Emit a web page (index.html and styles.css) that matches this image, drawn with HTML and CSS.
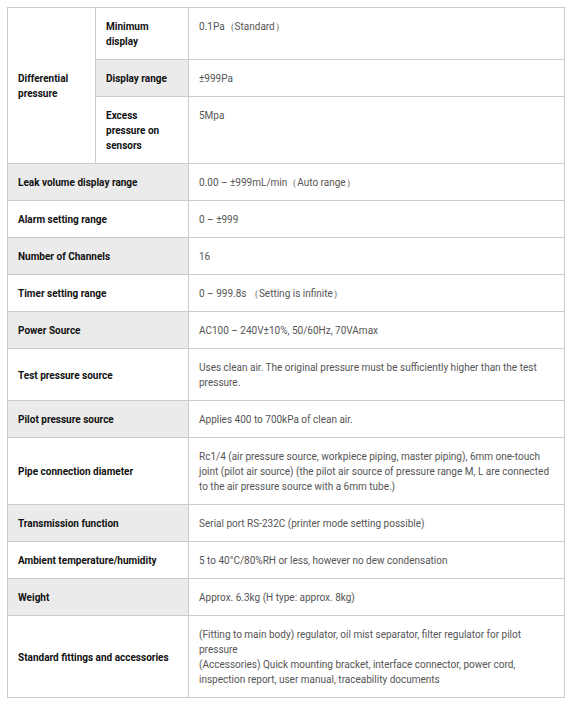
FILE: index.html
```html
<!DOCTYPE html>
<html>
<head>
<meta charset="utf-8">
<link rel="stylesheet" href="styles.css">
</head>
<body>
<table class="spec">
  <colgroup>
    <col class="c1">
    <col class="c2">
    <col class="c3">
  </colgroup>
  <tbody>
    <tr>
      <th class="lbl" rowspan="3">Differential pressure</th>
      <th class="lbl">Minimum display</th>
      <td class="val">0.1Pa（Standard）</td>
    </tr>
    <tr>
      <th class="lbl grey">Display range</th>
      <td class="val">±999Pa</td>
    </tr>
    <tr>
      <th class="lbl">Excess pressure on sensors</th>
      <td class="val">5Mpa</td>
    </tr>
    <tr>
      <th class="lbl grey" colspan="2">Leak volume display range</th>
      <td class="val">0.00 – ±999mL/min（Auto range）</td>
    </tr>
    <tr>
      <th class="lbl" colspan="2">Alarm setting range</th>
      <td class="val">0 – ±999</td>
    </tr>
    <tr>
      <th class="lbl grey" colspan="2">Number of Channels</th>
      <td class="val">16</td>
    </tr>
    <tr>
      <th class="lbl" colspan="2">Timer setting range</th>
      <td class="val">0 – 999.8s （Setting is infinite）</td>
    </tr>
    <tr>
      <th class="lbl grey" colspan="2">Power Source</th>
      <td class="val">AC100 – 240V±10%, 50/60Hz, 70VAmax</td>
    </tr>
    <tr>
      <th class="lbl" colspan="2">Test pressure source</th>
      <td class="val">Uses clean air. The original pressure must be sufficiently higher than the test pressure.</td>
    </tr>
    <tr>
      <th class="lbl grey" colspan="2">Pilot pressure source</th>
      <td class="val">Applies 400 to 700kPa of clean air.</td>
    </tr>
    <tr>
      <th class="lbl" colspan="2">Pipe connection diameter</th>
      <td class="val">Rc1/4 (air pressure source, workpiece piping, master piping), 6mm one-touch joint (pilot air source) (the pilot air source of pressure range M, L are connected to the air pressure source with a 6mm tube.)</td>
    </tr>
    <tr>
      <th class="lbl grey" colspan="2">Transmission function</th>
      <td class="val">Serial port RS-232C (printer mode setting possible)</td>
    </tr>
    <tr>
      <th class="lbl" colspan="2">Ambient temperature/humidity</th>
      <td class="val">5 to 40°C/80%RH or less, however no dew condensation</td>
    </tr>
    <tr>
      <th class="lbl grey" colspan="2">Weight</th>
      <td class="val">Approx. 6.3kg (H type: approx. 8kg)</td>
    </tr>
    <tr>
      <th class="lbl" colspan="2">Standard fittings and accessories</th>
      <td class="val">(Fitting to main body) regulator, oil mist separator, filter regulator for pilot pressure<br>(Accessories) Quick mounting bracket, interface connector, power cord, inspection report, user manual, traceability documents</td>
    </tr>
  </tbody>
</table>
</body>
</html>
```
FILE: styles.css
```css
html, body {
  margin: 0;
  padding: 0;
  background: #fff;
}
body {
  padding: 7px;
  font-family: Roboto, "Liberation Sans", sans-serif;
  font-size: 10px;
  line-height: 15px;
}
.spec {
  border-collapse: collapse;
  table-layout: fixed;
  width: 557px;
}
.c1 { width: 88px; }
.c2 { width: 93px; }
.c3 { width: 376px; }
.spec th, .spec td {
  border: 1px solid #cccccc;
  padding: 11px 10px 10px 10px;
  text-align: left;
}
.lbl {
  font-weight: bold;
  color: #111;
  vertical-align: middle;
  background: #fff;
}
.lbl.grey {
  background: #ebebeb;
}
.val {
  color: #555;
  vertical-align: top;
  padding-left: 11px;
  padding-right: 14px;
}
```
